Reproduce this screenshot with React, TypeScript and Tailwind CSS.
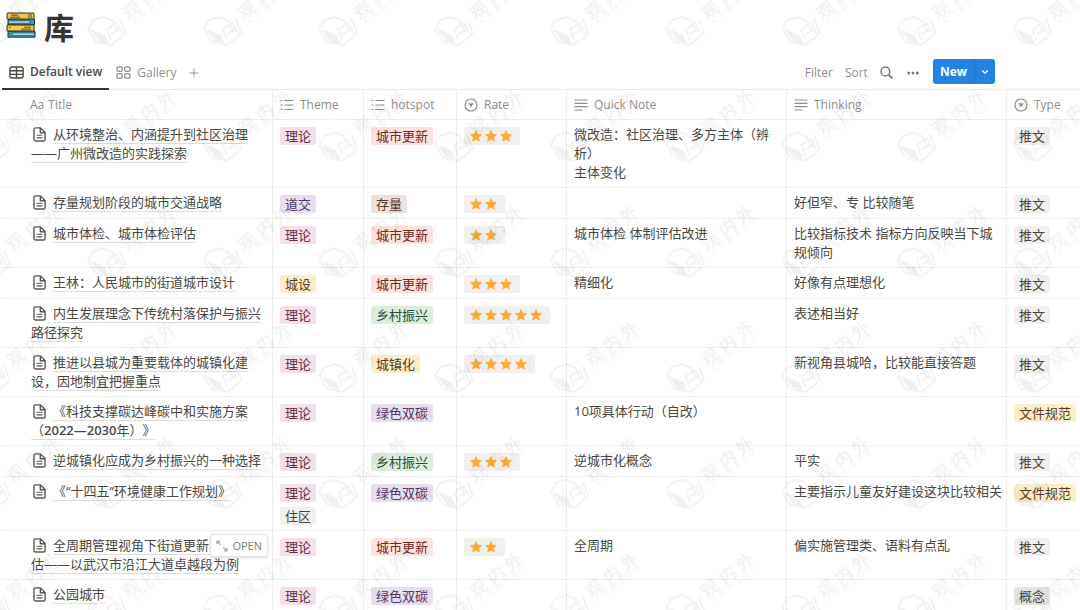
import type { ReactNode } from "react";
import clsx from "clsx";
import { ChevronDown, Plus } from "lucide-react";

type Tag = { label: string; tone: keyof typeof tones };

type Row = {
  title: ReactNode;
  themes: Tag[];
  hotspot: Tag;
  rate: number;
  note?: string[];
  thinking?: string;
  type: Tag;
  open?: boolean;
};

const tones = {
  pink: "bg-[#f5e0e9] text-[#5c3447]",
  purple: "bg-[#e8deee] text-[#523764]",
  yellow: "bg-[#fdecc8] text-[#523e2b]",
  gray: "bg-[#f1f0ef] text-[#484640]",
  stone: "bg-[#e3e2e0] text-[#484640]",
  red: "bg-[#ffe2dd] text-[#6d2a28]",
  brown: "bg-[#eee0da] text-[#543a2e]",
  green: "bg-[#dbeddb] text-[#2c4a3a]",
};

const theory: Tag = { label: "理论", tone: "pink" };
const renewal: Tag = { label: "城市更新", tone: "red" };
const rural: Tag = { label: "乡村振兴", tone: "green" };
const carbon: Tag = { label: "绿色双碳", tone: "purple" };
const article: Tag = { label: "推文", tone: "gray" };
const policy: Tag = { label: "文件规范", tone: "yellow" };

const rows: Row[] = [
  {
    title: "从环境整治、内涵提升到社区治理——广州微改造的实践探索",
    themes: [theory],
    hotspot: renewal,
    rate: 3,
    note: ["微改造：社区治理、多方主体（辨析）", "主体变化"],
    type: article,
  },
  {
    title: "存量规划阶段的城市交通战略",
    themes: [{ label: "道交", tone: "purple" }],
    hotspot: { label: "存量", tone: "brown" },
    rate: 2,
    thinking: "好但窄、专 比较随笔",
    type: article,
  },
  {
    title: "城市体检、城市体检评估",
    themes: [theory],
    hotspot: renewal,
    rate: 2,
    note: ["城市体检 体制评估改进"],
    thinking: "比较指标技术 指标方向反映当下城规倾向",
    type: article,
  },
  {
    title: "王林：人民城市的街道城市设计",
    themes: [{ label: "城设", tone: "yellow" }],
    hotspot: renewal,
    rate: 3,
    note: ["精细化"],
    thinking: "好像有点理想化",
    type: article,
  },
  {
    title: "内生发展理念下传统村落保护与振兴路径探究",
    themes: [theory],
    hotspot: rural,
    rate: 5,
    thinking: "表述相当好",
    type: article,
  },
  {
    title: "推进以县城为重要载体的城镇化建设，因地制宜把握重点",
    themes: [theory],
    hotspot: { label: "城镇化", tone: "yellow" },
    rate: 4,
    thinking: "新视角县城哈，比较能直接答题",
    type: article,
  },
  {
    title: (
      <>
        《科技支撑碳达峰碳中和实施方案（<span className="font-semibold">2022—2030</span>年）》
      </>
    ),
    themes: [theory],
    hotspot: carbon,
    rate: 0,
    note: ["10项具体行动（自改）"],
    type: policy,
  },
  {
    title: "逆城镇化应成为乡村振兴的一种选择",
    themes: [theory],
    hotspot: rural,
    rate: 3,
    note: ["逆城市化概念"],
    thinking: "平实",
    type: article,
  },
  {
    title: "《“十四五”环境健康工作规划》",
    themes: [theory, { label: "住区", tone: "gray" }],
    hotspot: carbon,
    rate: 0,
    thinking: "主要指示儿童友好建设这块比较相关",
    type: policy,
  },
  {
    title: (
      <>
        全周期管理视角下街道更新实践评<span className="whitespace-nowrap">估——</span>以武汉市沿江大道卓越段为例
      </>
    ),
    themes: [theory],
    hotspot: renewal,
    rate: 2,
    note: ["全周期"],
    thinking: "偏实施管理类、语料有点乱",
    type: article,
    open: true,
  },
  {
    title: "公园城市",
    themes: [theory],
    hotspot: carbon,
    rate: 0,
    type: { label: "概念", tone: "stone" },
  },
];

function BooksIcon() {
  return (
    <svg viewBox="0 0 30 27" className="h-[27px] w-[30px]" aria-hidden="true">
      <g stroke="#22303a" strokeWidth="1" strokeLinejoin="round">
        <rect x="1" y="1" width="27" height="6.2" rx="0.8" fill="#fcc93e" />
        <path d="M2 7.2h26.5v5.8H2z" fill="#2aa3c0" />
        <path d="M2.5 8.9h21.5v2.4H2.5z" fill="#c9d6dc" strokeWidth="0.6" />
        <rect x="1" y="13" width="27" height="6.2" rx="0.8" fill="#fcc93e" />
        <path d="M2 19.2h27v6H2z" fill="#2aa3c0" />
        <path d="M6 21h22.5v2.4H6z" fill="#c9d6dc" strokeWidth="0.6" />
      </g>
      <g stroke="#3c3420" strokeWidth="0.8" fill="none">
        <path d="M5 3.2h7M4 5.2h10M18 15.2h7M15 17.2h10M3.5 15.5h1.5" />
        <rect x="22.8" y="2.8" width="2.4" height="2.4" fill="#fff0b8" />
      </g>
    </svg>
  );
}

function TableIcon() {
  return (
    <svg viewBox="0 0 15 13" className="h-[13px] w-[15px]" fill="none" stroke="currentColor" strokeWidth="1.4" aria-hidden="true">
      <rect x="0.9" y="1" width="13.2" height="11" rx="2" />
      <path d="M1 4.7h13M1 8.4h13M7.5 1v11" />
    </svg>
  );
}

function GalleryIcon() {
  return (
    <svg viewBox="0 0 15 13" className="h-[13px] w-[15px]" fill="none" stroke="currentColor" strokeWidth="1.3" aria-hidden="true">
      <rect x="1" y="0.9" width="5.2" height="4.4" rx="1.2" />
      <rect x="8.8" y="0.9" width="5.2" height="4.4" rx="1.2" />
      <rect x="1" y="7.7" width="5.2" height="4.4" rx="1.2" />
      <rect x="8.8" y="7.7" width="5.2" height="4.4" rx="1.2" />
    </svg>
  );
}

function SearchIcon() {
  return (
    <svg viewBox="0 0 13 13" className="size-[13px]" fill="none" stroke="currentColor" aria-hidden="true">
      <circle cx="5.4" cy="5.4" r="4.4" strokeWidth="1.5" />
      <path d="M8.6 8.6l3.6 3.6" strokeWidth="2" />
    </svg>
  );
}

function DotsIcon() {
  return (
    <svg viewBox="0 0 12 4" className="h-1 w-3" fill="currentColor" aria-hidden="true">
      <circle cx="1.7" cy="2" r="1.5" />
      <circle cx="6" cy="2" r="1.5" />
      <circle cx="10.3" cy="2" r="1.5" />
    </svg>
  );
}

function ListIcon() {
  return (
    <svg viewBox="0 0 14 12" className="h-3 w-3.5" stroke="currentColor" strokeWidth="1.2" aria-hidden="true">
      <path d="M0.5 1.5h2M4.5 1.5h9M0.5 6h2M4.5 6h9M0.5 10.5h2M4.5 10.5h9" />
    </svg>
  );
}

function TextIcon() {
  return (
    <svg viewBox="0 0 14 12" className="h-3 w-3.5" stroke="currentColor" strokeWidth="1.2" aria-hidden="true">
      <path d="M0.5 1h13M0.5 4.3h13M0.5 7.7h13M0.5 11h8" />
    </svg>
  );
}

function SelectIcon() {
  return (
    <svg viewBox="0 0 14 14" className="size-3.5" aria-hidden="true">
      <circle cx="7" cy="7" r="6" fill="none" stroke="currentColor" strokeWidth="1.2" />
      <path d="M4.3 5.2h5.4L7 9.6z" fill="currentColor" />
    </svg>
  );
}

function PageIcon() {
  return (
    <svg
      viewBox="0 0 13 15"
      className="mr-[7px] ml-[2px] inline-block h-[15px] w-[13px] align-[-3px] text-[#5a5954]"
      fill="none"
      stroke="currentColor"
      strokeWidth="1.4"
      strokeLinejoin="round"
      aria-hidden="true"
    >
      <path d="M2.6 0.9h4.9l4.6 4.6v6.9a1.6 1.6 0 0 1-1.6 1.6H2.6A1.6 1.6 0 0 1 1 12.4V2.5A1.6 1.6 0 0 1 2.6 0.9z" />
      <path d="M7.3 1v4.7h4.7" />
      <path d="M3.6 8.3h5.8M3.6 10.9h5.8" strokeWidth="1.1" />
    </svg>
  );
}

function Star() {
  return (
    <svg viewBox="0 0 12 12" className="size-3" fill="#ffa92e" stroke="#ffa92e" strokeWidth="0.8" strokeLinejoin="round" aria-hidden="true">
      <path d="M6 0.7l1.5 3.5 3.9 0.4-2.9 2.6 0.8 3.9L6 9.1l-3.3 2 0.8-3.9L0.6 4.6l3.9-0.4z" />
    </svg>
  );
}

function OpenIcon() {
  return (
    <svg viewBox="0 0 12 12" className="size-3" fill="none" stroke="#a3a29e" strokeWidth="1.1" aria-hidden="true">
      <path d="M1 4V1h3M1 1l3.8 3.8M11 8v3H8M11 11L7.2 7.2" />
    </svg>
  );
}

function Chip({ label, tone }: Tag) {
  return (
    <span className={clsx("block h-[18px] w-fit rounded-[3px] px-[5px] leading-[18px] whitespace-nowrap", tones[tone])}>
      {label}
    </span>
  );
}

function Rating({ value }: { value: number }) {
  return (
    <span
      role="img"
      aria-label={`${value} stars`}
      className="flex h-[18px] w-fit items-center gap-[3px] rounded-[3px] bg-[#f1f0ef] pr-2 pl-1.5"
    >
      {Array.from({ length: value }, (_, i) => (
        <Star key={i} />
      ))}
    </span>
  );
}

function HeadCell({ icon, children }: { icon: ReactNode; children: ReactNode }) {
  return (
    <th scope="col" className="h-[30px] border-b border-l border-[#ededec] p-0 pl-[7px] font-normal">
      <span className="flex items-center gap-1.5">
        {icon}
        {children}
      </span>
    </th>
  );
}

function Cell({ children, tags }: { children?: ReactNode; tags?: boolean }) {
  return (
    <td
      className={clsx(
        "border-b border-l border-[#ededec] pr-[3px] pl-[7px] align-top",
        tags ? "pt-[7px] pb-[5px]" : "py-[5px]",
      )}
    >
      {children}
    </td>
  );
}

function Watermark() {
  return (
    <svg className="pointer-events-none absolute inset-0 size-full" aria-hidden="true">
      <defs>
        <pattern id="mark" x="87" y="15" width="115.7" height="115.7" patternUnits="userSpaceOnUse">
          <g fill="none" stroke="#000" strokeWidth="1.5" strokeLinejoin="round" opacity="0.06">
            <path d="M26 6L17 2 6 5 1 14l8 13 15 3 11-8 2-4" />
            <path d="M3 14l15 6 4 9-10-3z" fill="#000" stroke="none" />
            <path d="M20 14l4 11M20 14l10-6 5 10M25 5l6 12M24 19l9-5M33 4l6 15" />
          </g>
          <g fill="#000" opacity="0.06" fontWeight="500" textAnchor="middle">
            <g fontSize="17">
              <text transform="translate(48 0) rotate(-38)">观</text>
              <text transform="translate(48 115.7) rotate(-38)">观</text>
              <text transform="translate(66 101.7) rotate(-38)">内</text>
              <text transform="translate(83 88.7) rotate(-38)">外</text>
            </g>
            <g fontSize="8">
              <text transform="translate(50 7) rotate(-38)">C</text>
              <text transform="translate(58 1) rotate(-38)">N</text>
              <text transform="translate(58 116.7) rotate(-38)">N</text>
              <text transform="translate(66 110.7) rotate(-38)">W</text>
              <text transform="translate(74 104.7) rotate(-38)">E</text>
              <text transform="translate(81 98.7) rotate(-38)">D</text>
              <text transform="translate(88 92.7) rotate(-38)">U</text>
            </g>
          </g>
        </pattern>
      </defs>
      <rect width="100%" height="100%" fill="url(#mark)" />
    </svg>
  );
}

export default function App() {
  return (
    <main className="relative min-h-screen overflow-hidden bg-white pl-0.5 font-['Open_Sans','Noto_Sans_CJK_SC',sans-serif] text-[13px] leading-[19px] text-[#4a4843] [text-spacing-trim:space-all]">
      <header className="flex h-14 items-start gap-2 pt-3 pl-1">
        <BooksIcon />
        <h1 className="text-[30px] leading-8 font-bold text-[#37352f]">库</h1>
      </header>

      <div className="flex h-[34px] items-center justify-between border-b border-[#e9e9e7] pr-[85px] text-xs">
        <nav className="flex h-full text-[#8f8e8a]">
          <button className="-mb-px flex h-[34px] items-center gap-1.5 border-b-2 border-[#37352f] px-[7px] font-semibold text-[#4a4843]">
            <TableIcon />
            Default view
          </button>
          <button className="flex items-center gap-1.5 px-[7px] font-medium">
            <GalleryIcon />
            Gallery
          </button>
          <button aria-label="Add view" className="px-1">
            <Plus className="size-3.5" strokeWidth={1.5} />
          </button>
        </nav>
        <div className="flex items-center text-[#8f8e8a]">
          <button className="mr-3">Filter</button>
          <button className="mr-3">Sort</button>
          <button aria-label="Search" className="mr-3.5 text-[#7c7b77]">
            <SearchIcon />
          </button>
          <button aria-label="More" className="mr-3.5 text-[#7c7b77]">
            <DotsIcon />
          </button>
          <div className="mb-0.5 flex h-[25px] overflow-hidden rounded-[3px] bg-[#2383e2] text-white">
            <button className="px-[7px] font-bold">New</button>
            <button aria-label="New options" className="border-l border-[#1f76cc] px-[5px]">
              <ChevronDown className="size-2.5" strokeWidth={3} />
            </button>
          </div>
        </div>
      </div>

      <table className="w-full table-fixed border-separate border-spacing-0 text-left">
        <colgroup>
          <col className="w-[270px]" />
          <col className="w-[91px]" />
          <col className="w-[93px]" />
          <col className="w-[110px]" />
          <col className="w-[220px]" />
          <col className="w-[220px]" />
          <col />
        </colgroup>
        <thead className="text-xs text-[#8f8e8a]">
          <tr>
            <th scope="col" className="h-[30px] border-b border-[#ededec] p-0 pl-7 font-normal">
              <span className="flex items-center gap-1">
                <span aria-hidden="true">Aa</span>
                Title
              </span>
            </th>
            <HeadCell icon={<ListIcon />}>Theme</HeadCell>
            <HeadCell icon={<ListIcon />}>hotspot</HeadCell>
            <HeadCell icon={<SelectIcon />}>Rate</HeadCell>
            <HeadCell icon={<TextIcon />}>Quick Note</HeadCell>
            <HeadCell icon={<TextIcon />}>Thinking</HeadCell>
            <HeadCell icon={<SelectIcon />}>Type</HeadCell>
          </tr>
        </thead>
        <tbody>
          {rows.map((row, i) => (
            <tr key={i}>
              <td className="relative border-b border-[#ededec] py-[5px] pr-[3px] pl-[29px] align-top">
                <PageIcon />
                <a href="#" className="underline decoration-[#dddddb] decoration-1 underline-offset-4">
                  {row.title}
                </a>
                {row.open && (
                  <button className="absolute top-[3px] right-1 flex h-[23px] items-center gap-1 rounded-[3px] border border-[#e4e4e2] bg-white px-[5px] text-[11px] text-[#7c7b77] shadow-sm">
                    <OpenIcon />
                    OPEN
                  </button>
                )}
              </td>
              <Cell tags>
                <div className="flex flex-col gap-[5px]">
                  {row.themes.map((t) => (
                    <Chip key={t.label} {...t} />
                  ))}
                </div>
              </Cell>
              <Cell tags>
                <Chip {...row.hotspot} />
              </Cell>
              <Cell tags>{row.rate > 0 && <Rating value={row.rate} />}</Cell>
              <Cell>
                {row.note?.map((line) => (
                  <p key={line}>{line}</p>
                ))}
              </Cell>
              <Cell>{row.thinking}</Cell>
              <Cell tags>
                <Chip {...row.type} />
              </Cell>
            </tr>
          ))}
        </tbody>
      </table>

      <Watermark />
    </main>
  );
}
